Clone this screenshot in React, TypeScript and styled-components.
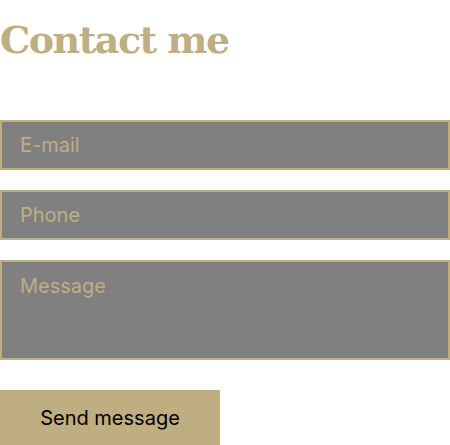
import React from "react";
import styled, { createGlobalStyle } from "styled-components";

const Global = createGlobalStyle`
  html, body { margin: 0; padding: 0; background: #fff; }
  * { box-sizing: border-box; }
`;

const Section = styled.section`
  display: flex;
  flex-direction: column;
  width: 450px;
`;

const Title = styled.h1`
  margin: 12px 0 0 0;
  font-family: "DejaVu Serif", "Liberation Serif", serif;
  font-weight: 700;
  font-size: 38px;
  line-height: 56px;
  color: #bfae82;
  letter-spacing: -1.5px;
`;

const Form = styled.form`
  display: flex;
  flex-direction: column;
  gap: 20px;
  margin-top: 52px;
`;

const fieldBase = `
  width: 450px;
  background: #808080;
  border: 2px solid #bfae82;
  padding: 0 18px;
  font-family: Inter, "Noto Sans", sans-serif;
  font-size: 20px;
  color: #bfae82;
  outline: none;
  &::placeholder { color: #bfae82; opacity: 1; }
`;

const Input = styled.input`
  ${fieldBase}
  height: 50px;
`;

const TextArea = styled.textarea`
  ${fieldBase}
  height: 100px;
  padding-top: 12px;
  resize: none;
  display: block;
`;

const Button = styled.button`
  margin-top: 10px;
  width: 220px;
  height: 56px;
  border: none;
  background: #bfae82;
  color: #000;
  font-family: Inter, "Noto Sans", sans-serif;
  font-size: 20px;
  padding: 0;
`;

export default function App() {
  return (
    <Section>
      <Global />
      <Title>Contact me</Title>
      <Form onSubmit={(e) => e.preventDefault()}>
        <Input type="email" placeholder="E-mail" />
        <Input type="tel" placeholder="Phone" />
        <TextArea placeholder="Message" />
        <Button type="submit">Send message</Button>
      </Form>
    </Section>
  );
}
